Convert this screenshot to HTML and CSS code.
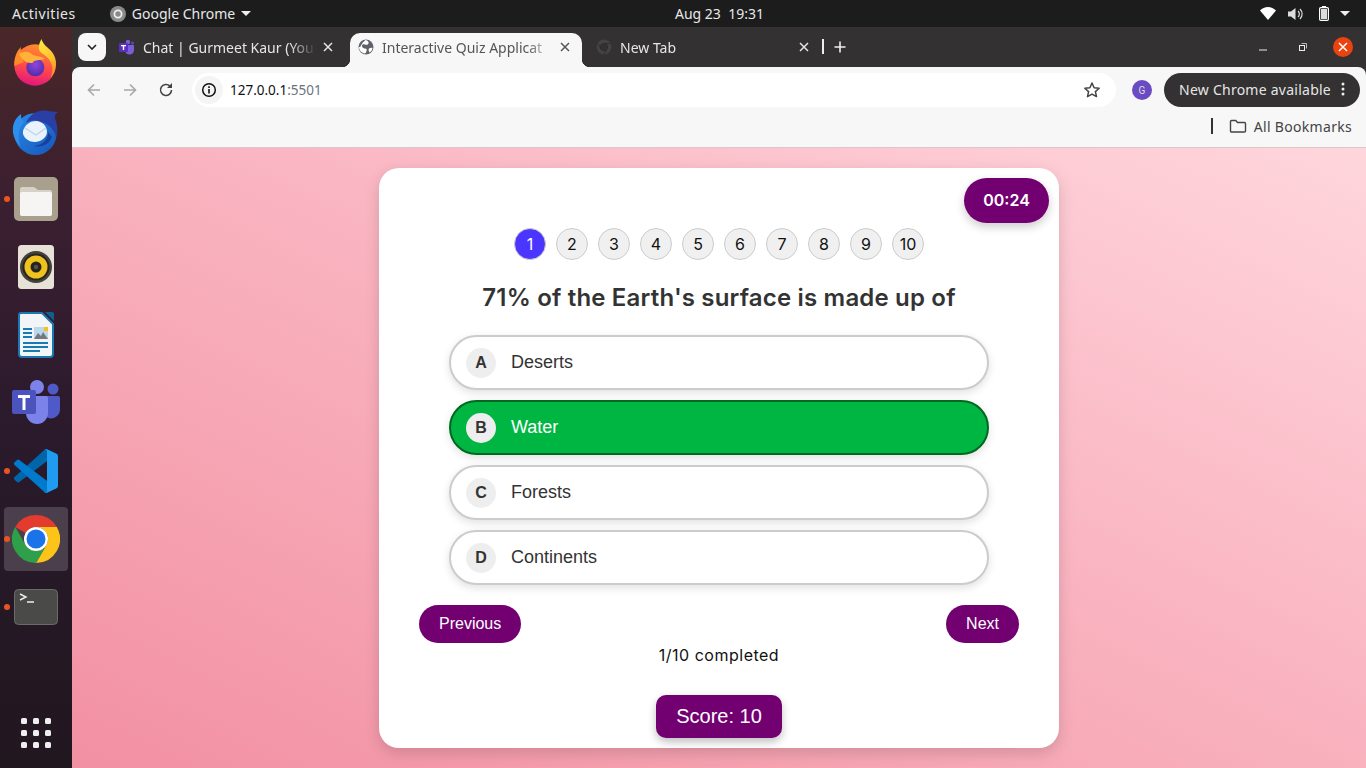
FILE: index.html
```html
<!DOCTYPE html>
<html lang="en">
<head>
  <meta charset="UTF-8" />
  <meta name="viewport" content="width=device-width, initial-scale=1.0"/>
  <title>Interactive Quiz Application</title>
  <link rel="stylesheet" href="styles.css">
</head>
<body>

  <header class="topbar">
    <div class="topbar-left">
      <span class="activities">Activities</span>
      <span class="app-menu">
        <svg class="app-menu-icon" viewBox="0 0 16 16"><circle cx="8" cy="8" r="8" fill="#8a8a8a"/><circle cx="8" cy="8" r="3.600" fill="none" stroke="#eee" stroke-width="1.800"/></svg>
        Google Chrome
        <i class="caret"></i>
      </span>
    </div>
    <div class="clock">Aug 23&nbsp;&nbsp;19:31</div>
    <div class="tray">
      <svg width="16" height="13" viewBox="0 0 16 13"><path d="M0 3.600C2 1.400 5 0 8 0s6 1.400 8 3.600L8 13z" fill="#fff"/></svg>
      <svg width="16" height="14" viewBox="0 0 16 14"><path d="M0 4.500h3L7.500 1v12L3 9.500H0z" fill="#ddd"/><path d="M10 4a4 4 0 0 1 0 6M12 2a7 7 0 0 1 0 10" fill="none" stroke="#ddd" stroke-width="1.200"/></svg>
      <svg class="tray-battery" width="10" height="15" viewBox="0 0 10 15"><rect x=".6" y="1.600" width="8.800" height="12.800" rx="1.200" fill="none" stroke="#fff" stroke-width="1.200"/><rect x="3" y="0" width="4" height="2" fill="#fff"/><rect x="2" y="3" width="6" height="10" fill="#ddd"/></svg>
      <i class="caret"></i>
    </div>
  </header>

  <div class="desktop">
    <aside class="dock">
      <div class="dock-item">
        <svg width="48" height="48" viewBox="0 0 48 48">
          <defs>
            <linearGradient id="ffBody" x1="0.6" y1="0" x2="0.4" y2="1"><stop offset="0" stop-color="#ff8f2a"/><stop offset=".55" stop-color="#ff4a4a"/><stop offset="1" stop-color="#e3157f"/></linearGradient>
            <linearGradient id="ffFlame" x1="0.3" y1="0" x2="0.7" y2="1"><stop offset="0" stop-color="#ffe83f"/><stop offset=".6" stop-color="#ffbd2e"/><stop offset="1" stop-color="#ff8a24"/></linearGradient>
            <radialGradient id="ffCore" cx=".5" cy=".35" r=".7"><stop offset="0" stop-color="#9146dc"/><stop offset="1" stop-color="#4a2aa6"/></radialGradient>
          </defs>
          <circle cx="23" cy="26" r="20.700" fill="url(#ffBody)"/>
          <path d="M9 8C4.500 12 2 19 2.300 27L12 23C9 18 8 14 9 8z" fill="#ff8a2a"/>
          <circle cx="23.300" cy="28.300" r="9" fill="url(#ffCore)"/>
          <path d="M29.500 0C31 6 36 8 40 13c3 4 4.300 8 4 13-.3 5-2 9-5.500 13 2.500-6 2.500-11 .5-15-2-5-6-8-9.500-10-3.500-3-3.500-8 0-14z" fill="url(#ffFlame)"/>
          <path d="M7 15c4-3 10-3 14 1 3 1 8 1 12 4-4 1-8 1-11 2-1 2-2 2-3 2-5 0-9-3-12-9z" fill="#ffb238"/>
        </svg>
      </div>
      <div class="dock-item">
        <svg width="48" height="48" viewBox="0 0 48 48">
          <defs>
            <linearGradient id="tbBody" x1="0" y1="0" x2="1" y2="1"><stop offset="0" stop-color="#2a8be8"/><stop offset="1" stop-color="#1555b8"/></linearGradient>
          </defs>
          <circle cx="23.500" cy="27" r="21" fill="url(#tbBody)"/>
          <path d="M9 7C2 12-.5 20 1.500 28c1 4 3 8 7 11C5 30 7 20 12 15 9.500 13 9 10 9 7z" fill="#2c8fee"/>
          <path d="M14 16C18 6 28 2 35 4l11 1c-3 2-4 4-3 7 3 6 3 14 1 18-2-8-8-14-18-16-6-1-9 0-12 2z" fill="#2a3fa6"/>
          <path d="M11 24c2-7 8-10 13-10 6 0 11 5 11 11 0 6-7 10-12 10-7 0-13-5-12-11z" fill="#eaf2fb"/>
          <path d="M13 21l11 7 10-7" fill="none" stroke="#bcd4ee" stroke-width="1.300"/>
          <path d="M36 25c1 7-5 13-14 14 8 2 15-2 18-9z" fill="#173f9e"/>
        </svg>
      </div>
      <div class="dock-item has-dot">
        <svg width="44" height="44" viewBox="0 0 44 44">
          <rect width="44" height="44" rx="5" fill="#a8a08c"/>
          <path d="M6 12a2 2 0 0 1 2-2h12l4 3h12a2 2 0 0 1 2 2v22a2 2 0 0 1-2 2H8a2 2 0 0 1-2-2z" fill="#d6d2c8"/>
          <path d="M6 17a2 2 0 0 1 2-2h28a2 2 0 0 1 2 2v20a2 2 0 0 1-2 2H8a2 2 0 0 1-2-2z" fill="#f6f5f3"/>
        </svg>
      </div>
      <div class="dock-item">
        <svg width="36" height="44" viewBox="0 0 36 44">
          <rect width="36" height="44" rx="3.500" fill="#e6e2d8"/>
          <circle cx="18" cy="22" r="16" fill="#45423e"/>
          <circle cx="18" cy="22" r="13.500" fill="#27251f"/>
          <circle cx="18" cy="22" r="11.500" fill="#efc21d"/>
          <circle cx="18" cy="22" r="5.500" fill="#26241f"/>
          <circle cx="18" cy="22" r="2.200" fill="#55524c"/>
        </svg>
      </div>
      <div class="dock-item">
        <svg width="36" height="46" viewBox="0 0 36 46">
          <path d="M3 1h21l11 11v30a3 3 0 0 1-3 3H4a3 3 0 0 1-3-3V3a2 2 0 0 1 2-2z" fill="#f2f5f8" stroke="#1b78b2" stroke-width="2"/>
          <path d="M27 0h7a2 2 0 0 1 2 2v7z" fill="#0f5f90"/>
          <path d="M5 17h9M5 21h9M5 25h9M5 31h25M5 35h25M5 39h17" stroke="#1a7ab5" stroke-width="2"/>
          <rect x="16" y="15" width="14" height="12" fill="#bcd8ea"/>
          <path d="M16 27l4-6 3 3 2-4 5 7z" fill="#77797c"/>
          <rect x="26" y="15" width="4" height="4" fill="#f2c21c"/>
        </svg>
      </div>
      <div class="dock-item">
        <svg width="48" height="48" viewBox="0 0 48 48">
          <circle cx="41" cy="10" r="5.500" fill="#5059c9"/>
          <path d="M33 17h13a2 2 0 0 1 2 2v11a9 9 0 0 1-15 7z" fill="#5059c9"/>
          <circle cx="25" cy="8" r="7" fill="#7b83eb"/>
          <path d="M14 17h20a2 2 0 0 1 2 2v15a11 11 0 0 1-22 0z" fill="#7b83eb"/>
          <rect y="11" width="24" height="24" rx="2" fill="#4b53bc"/>
          <path d="M6 16h12v3h-4.500v12h-3V19H6z" fill="#fff"/>
        </svg>
      </div>
      <div class="dock-item has-dot">
        <svg width="44" height="44" viewBox="0 0 100 100">
          <path d="M96.46 10.8 75.86.87a6.230 6.230 0 0 0-7.100 1.200L1.340 63.600a4.160 4.160 0 0 0 0 6.160l5.500 5a4.160 4.160 0 0 0 5.320.24L93.400 13.370c2.720-2.070 6.600-.13 6.600 3.280v-.24a6.250 6.250 0 0 0-3.540-5.600Z" fill="#0065a9"/>
          <path d="M96.46 89.200 75.860 99.130a6.230 6.230 0 0 1-7.100-1.200L1.340 36.400a4.160 4.160 0 0 1 0-6.160l5.500-5a4.160 4.160 0 0 1 5.320-.24L93.400 86.630c2.720 2.070 6.600.13 6.600-3.280v.24a6.250 6.250 0 0 1-3.540 5.600Z" fill="#007acc"/>
          <path d="M75.860 99.130a6.220 6.220 0 0 1-7.100-1.200c2.300 2.300 6.240.67 6.240-2.580V4.650c0-3.250-3.940-4.880-6.240-2.580a6.220 6.220 0 0 1 7.100-1.200l20.600 9.900A6.250 6.250 0 0 1 100 16.400v67.200a6.250 6.250 0 0 1-3.540 5.630Z" fill="#1f9cf0"/>
        </svg>
      </div>
      <div class="dock-item has-dot is-current">
        <svg width="48" height="48" viewBox="0 0 48 48">
          <path d="M24 0A24 24 0 0 1 44.800 12H24a12 12 0 0 0-10.400 6L3.200 12A24 24 0 0 1 24 0z" fill="#e33b2e"/>
          <path d="M44.800 12A24 24 0 0 1 24 48L34.400 30A12 12 0 0 0 24 12z" fill="#fcc419"/>
          <path d="M3.200 12A24 24 0 0 0 24 48L34.400 30a12 12 0 0 1-20.800 0z" fill="#2fa04a"/>
          <circle cx="24" cy="24" r="12" fill="#fff"/>
          <circle cx="24" cy="24" r="9.500" fill="#1a73e8"/>
        </svg>
      </div>
      <div class="dock-item has-dot">
        <svg width="44" height="36" viewBox="0 0 44 36">
          <rect x=".5" y=".5" width="43" height="35" rx="4" fill="#4a4a48" stroke="#6b6b68"/>
          <path d="M6 5l6 3-6 3M13 13h7" fill="none" stroke="#eee" stroke-width="1.400"/>
        </svg>
      </div>
      <div class="dock-item dock-apps">
        <div class="apps-grid">
          <i></i><i></i><i></i><i></i><i></i><i></i><i></i><i></i><i></i>
        </div>
      </div>
    </aside>

    <div class="browser">
      <div class="tabstrip">
        <button class="tab-search">
          <svg width="10" height="6" viewBox="0 0 10 6"><path d="M1 1l4 4 4-4" fill="none" stroke="#222" stroke-width="1.600"/></svg>
        </button>
        <div class="tab">
          <svg class="favicon" width="16" height="16" viewBox="0 0 16 16"><circle cx="9" cy="3" r="2.200" fill="#7b5fd8"/><circle cx="13.500" cy="4" r="1.600" fill="#5b45b5"/><path d="M6 6h9v5a4.500 4.500 0 0 1-9 0z" fill="#7b5fd8"/><rect y="4" width="9" height="9" rx="1" fill="#5a2fc0"/><path d="M2 6h5v1.200H5.200V11H3.800V7.200H2z" fill="#fff"/></svg>
          <span class="tab-title">Chat | Gurmeet Kaur (You</span>
          <svg class="tab-close" width="16" height="10" viewBox="0 0 16 10"><path d="M4 1l8 8M12 1l-8 8" stroke="currentColor" stroke-width="1.500"/></svg>
        </div>
        <div class="tab tab-active">
          <svg class="favicon" width="16" height="16" viewBox="0 0 16 16"><circle cx="8" cy="8" r="7.500" fill="#5f6368"/><path d="M8 1c2 1 3 2 2.500 3.500S8 6 7 5.500 4.500 5 4 6.500s1.500 3 3 3 2 1 1.500 2.500-1 2-1.500 2.500C4 14 1 11.500 1 8c1 0 1.500-.5 2-1.500S6 1.500 8 1zM11 9.500c1-.5 2.500-1 3.500-.5-.3 2-1.500 3.500-3 4.500-.5-1-1.500-3-.5-4z" fill="#fff"/></svg>
          <span class="tab-title">Interactive Quiz Applicat</span>
          <svg class="tab-close" width="16" height="10" viewBox="0 0 16 10"><path d="M4 1l8 8M12 1l-8 8" stroke="currentColor" stroke-width="1.500"/></svg>
        </div>
        <div class="tab tab-last">
          <svg class="favicon" width="16" height="16" viewBox="0 0 16 16"><circle cx="8" cy="8" r="7.500" fill="#434345"/><circle cx="8" cy="8" r="3.500" fill="#333132" stroke="#2c2c2e"/><path d="M8 4.500h6.500M5 10L1.800 4.500M11 10l-3.200 5.300" stroke="#2f2f31"/></svg>
          <span class="tab-title tab-title-plain">New Tab</span>
          <svg class="tab-close" width="16" height="10" viewBox="0 0 16 10"><path d="M4 1l8 8M12 1l-8 8" stroke="currentColor" stroke-width="1.500"/></svg>
        </div>
        <span class="tab-sep"></span>
        <svg class="tab-new" width="12" height="12" viewBox="0 0 12 12"><path d="M6 .5v11M.5 6h11" stroke="#eee" stroke-width="1.600"/></svg>
        <div class="win-controls">
          <svg width="10" height="10" viewBox="0 0 10 10"><path d="M1 8h8" stroke="#eee" stroke-width="1"/></svg>
          <svg width="10" height="10" viewBox="0 0 10 10"><rect x="1.500" y="3.500" width="5" height="5" fill="none" stroke="#eee"/><path d="M3.500 1.500h5v5" fill="none" stroke="#bbb"/></svg>
          <span class="win-close">
            <svg width="10" height="10" viewBox="0 0 10 10"><path d="M1 1l8 8M9 1l-8 8" stroke="#fff" stroke-width="1.500"/></svg>
          </span>
        </div>
      </div>

      <div class="toolbar">
        <svg class="tool" width="16" height="16" viewBox="0 0 16 16"><path d="M14 8H2.500M8 2.500L2.500 8 8 13.500" fill="none" stroke="#a8a8a8" stroke-width="1.600"/></svg>
        <svg class="tool" width="16" height="16" viewBox="0 0 16 16"><path d="M2 8h11.500M8 2.500L13.500 8 8 13.500" fill="none" stroke="#a8a8a8" stroke-width="1.600"/></svg>
        <svg class="tool" width="16" height="16" viewBox="0 0 16 16"><path d="M13.500 8a5.500 5.500 0 1 1-1.600-3.900" fill="none" stroke="#444" stroke-width="1.600"/><path d="M14 1v5H9z" fill="#444"/></svg>
        <div class="omnibox">
          <span class="site-info">
            <svg width="16" height="16" viewBox="0 0 16 16"><circle cx="8" cy="8" r="6.300" fill="none" stroke="#111" stroke-width="1.500"/><path d="M8 7v4.500M8 4.300v1.600" stroke="#111" stroke-width="1.600"/></svg>
          </span>
          <span class="url">127.0.0.1<span class="url-port">:5501</span></span>
          <svg class="star" width="18" height="18" viewBox="0 0 18 18"><path d="M9 2l2.100 4.700 5.100.5-3.800 3.400 1.100 5L9 13.100l-4.500 2.500 1.100-5-3.800-3.400 5.100-.5z" fill="none" stroke="#444" stroke-width="1.500" stroke-linejoin="round"/></svg>
        </div>
        <span class="avatar">G</span>
        <div class="update-pill">
          <span>New Chrome available</span>
          <svg width="4" height="14" viewBox="0 0 4 14"><circle cx="2" cy="2" r="1.500" fill="#eee"/><circle cx="2" cy="7" r="1.500" fill="#eee"/><circle cx="2" cy="12" r="1.500" fill="#eee"/></svg>
        </div>
      </div>

      <div class="bookmarks">
        <span class="bookmarks-sep"></span>
        <svg width="18" height="14" viewBox="0 0 18 14"><path d="M1.500 2.500a1 1 0 0 1 1-1h4.300l1.700 2h7a1 1 0 0 1 1 1v7.500a1 1 0 0 1-1 1h-13a1 1 0 0 1-1-1z" fill="none" stroke="#444" stroke-width="1.400"/></svg>
        <span class="bookmarks-label">All Bookmarks</span>
      </div>

      <main class="page">
        <section class="quiz-card">
          <div class="timer">00:24</div>

          <div class="question-nav">
            <span class="num num-active">1</span>
            <span class="num">2</span>
            <span class="num">3</span>
            <span class="num">4</span>
            <span class="num">5</span>
            <span class="num">6</span>
            <span class="num">7</span>
            <span class="num">8</span>
            <span class="num">9</span>
            <span class="num">10</span>
          </div>

          <h2 class="question">71% of the Earth's surface is made up of</h2>

          <div class="options">
            <div class="option"><span class="letter">A</span>Deserts</div>
            <div class="option option-correct"><span class="letter">B</span>Water</div>
            <div class="option"><span class="letter">C</span>Forests</div>
            <div class="option"><span class="letter">D</span>Continents</div>
          </div>

          <div class="quiz-buttons">
            <button class="quiz-btn">Previous</button>
            <button class="quiz-btn">Next</button>
          </div>

          <p class="progress">1/10 completed</p>

          <div class="score">Score: 10</div>
        </section>
      </main>
    </div>
  </div>

</body>
</html>
```

FILE: styles.css
```css
* {
  box-sizing: border-box;
}
html, body {
  margin: 0;
  height: 100%;
  overflow: hidden;
}
body {
  display: flex;
  flex-direction: column;
  font-family: "Noto Sans", sans-serif;
  background: #1d1d1d;
}

/* ubuntu top bar */
.topbar {
  height: 27px;
  flex: none;
  display: grid;
  grid-template-columns: 663px auto 1fr;
  align-items: center;
  background: #1c1c1c;
  color: #e8e8e8;
  font-size: 14px;
  padding: 0 16px 0 12px;
}
.topbar-left {
  display: flex;
  align-items: center;
  gap: 34px;
}
.activities {
  letter-spacing: 0.55px;
}
.app-menu {
  display: flex;
  align-items: center;
  gap: 6px;
}
.app-menu-icon {
  width: 16px;
  height: 16px;
}
.caret {
  display: inline-block;
  width: 0;
  height: 0;
  border-left: 5px solid transparent;
  border-right: 5px solid transparent;
  border-top: 5px solid #eee;
}
.clock {
  text-align: center;
  font-size: 14px;
}
.tray {
  display: flex;
  justify-content: flex-end;
  align-items: center;
  gap: 12px;
}
.tray-battery {
  margin: 0 -1px 0 3px;
}

.desktop {
  flex: 1;
  display: flex;
  min-height: 0;
}

/* dock */
.dock {
  width: 72px;
  flex: none;
  display: flex;
  flex-direction: column;
  align-items: center;
  gap: 4px;
  padding: 4px 0 3px;
  background: linear-gradient(to bottom, #4a2728 0%, #3a1f30 25%, #2a1a2c 55%, #21171f 100%);
}
.dock-item {
  position: relative;
  width: 64px;
  height: 64px;
  flex: none;
  display: flex;
  align-items: center;
  justify-content: center;
  border-radius: 4px;
}
.is-current {
  background: rgba(255,255,255,0.17);
}
.has-dot::before {
  content: "";
  position: absolute;
  left: 0;
  top: 29px;
  width: 6px;
  height: 6px;
  border-radius: 50%;
  background: #e95420;
}
.dock-apps {
  margin-top: auto;
}
.apps-grid {
  display: grid;
  grid-template-columns: repeat(3, 6px);
  gap: 6px;
}
.apps-grid i {
  width: 6px;
  height: 6px;
  border-radius: 1.5px;
  background: #eee;
}

/* chrome */
.browser {
  flex: 1;
  display: flex;
  flex-direction: column;
  min-width: 0;
  background: #333132;
}
.tabstrip {
  height: 40px;
  flex: none;
  display: flex;
  align-items: flex-end;
  padding-left: 6px;
  color: #e6e6e6;
  font-size: 14px;
}
.tab-search {
  width: 28px;
  height: 28px;
  align-self: flex-start;
  margin-top: 6px;
  margin-right: 2px;
  padding: 0;
  display: flex;
  align-items: center;
  justify-content: center;
  border: 0;
  border-radius: 8px;
  background: #f7f7f7;
}
.tab {
  position: relative;
  width: 234px;
  height: 34px;
  flex: none;
  display: flex;
  align-items: center;
  padding: 0 6px 6px 11px;
}
.tab-active {
  width: 232px;
  margin: 0 8px;
  padding: 0 9px 6px 8px;
  background: #f7f7f7;
  color: #555;
  border-radius: 10px 10px 0 0;
}
.tab-last {
  width: 231px;
  padding: 0 9px 6px 6px;
}
.tab-active::before,
.tab-active::after {
  content: "";
  position: absolute;
  bottom: 0;
  width: 8px;
  height: 8px;
  background: radial-gradient(circle at 0 0, transparent 8px, #f7f7f7 8.5px);
}
.tab-active::before {
  left: -8px;
}
.tab-active::after {
  right: -8px;
  transform: scaleX(-1);
}
.favicon {
  flex: none;
  margin-right: 8px;
}
.tab-title {
  flex: 1;
  white-space: nowrap;
  overflow: hidden;
  -webkit-mask-image: linear-gradient(to right, #000 85%, transparent 100%);
  mask-image: linear-gradient(to right, #000 85%, transparent 100%);
}
.tab-close {
  flex: none;
  margin-left: 4px;
}
.tab-sep {
  width: 2px;
  height: 15px;
  background: #eee;
  margin: 0 0 13px 1px;
}
.tab-new {
  margin: 0 0 14px 10px;
}
.win-controls {
  margin-left: auto;
  align-self: stretch;
  display: flex;
  align-items: center;
  gap: 30px;
  padding-right: 13px;
}
.win-close {
  width: 20px;
  height: 20px;
  margin-left: -5px;
  display: flex;
  align-items: center;
  justify-content: center;
  border-radius: 50%;
  background: #e9430f;
}

.toolbar {
  height: 40px;
  flex: none;
  display: flex;
  align-items: flex-start;
  padding: 6px 6px 0 14px;
  background: #f7f7f7;
  border-radius: 8px 8px 0 0;
}
.tool {
  margin: 9px 20px 0 0;
  flex: none;
}
.tool:nth-child(3) {
  margin-right: 18px;
}
.omnibox {
  flex: 1;
  height: 34px;
  display: flex;
  align-items: center;
  background: #fff;
  border-radius: 17px;
  padding: 0 15px 0 3px;
}
.site-info {
  width: 28px;
  height: 28px;
  display: flex;
  align-items: center;
  justify-content: center;
  border-radius: 50%;
  background: #f4f4f4;
}
.url {
  flex: 1;
  margin-left: 7px;
  font-size: 13.5px;
  color: #111;
}
.url-port {
  color: #6a7480;
}
.avatar {
  width: 20px;
  height: 20px;
  margin: 7px 12px 0 16px;
  flex: none;
  display: flex;
  align-items: center;
  justify-content: center;
  border-radius: 50%;
  background: #6a4bc4;
  color: #ddd;
  font-family: "Roboto", sans-serif;
  font-size: 10px;
}
.update-pill {
  width: 196px;
  height: 34px;
  flex: none;
  display: flex;
  align-items: center;
  justify-content: space-between;
  padding: 0 15px 2px;
  border-radius: 17px;
  background: #333132;
  color: #e6e6e6;
  font-size: 14px;
  letter-spacing: 0.25px;
}

.bookmarks {
  height: 41px;
  flex: none;
  display: flex;
  align-items: center;
  justify-content: flex-end;
  padding: 0 14px 2px 0;
  background: #f7f7f7;
  border-bottom: 1px solid #d9c8cc;
  color: #444;
  font-size: 14px;
}
.bookmarks-sep {
  width: 2px;
  height: 16px;
  background: #333;
  margin-right: 16px;
}
.bookmarks-label {
  margin-left: 7px;
  letter-spacing: 0.3px;
}

/* quiz page */
.page {
  flex: 1;
  min-height: 0;
  display: flex;
  justify-content: center;
  padding-top: 20px;
  background: linear-gradient(to top right, #f290a2 0%, #f9b1be 50%, #ffd6dd 100%);
}
.quiz-card {
  position: relative;
  width: 680px;
  height: 580px;
  padding: 60px 40px 10px;
  background: #fff;
  border-radius: 20px;
  box-shadow: 0 5px 15px rgba(0,0,0,0.15);
  text-align: center;
}
.timer {
  position: absolute;
  top: 10px;
  right: 10px;
  width: 85px;
  height: 45px;
  line-height: 45px;
  border-radius: 23px;
  background: #720071;
  color: #fff;
  font-family: "Inter", sans-serif;
  font-size: 16px;
  font-weight: 600;
  box-shadow: 0 4px 10px rgba(0,0,0,0.2);
}
.question-nav {
  display: flex;
  justify-content: center;
  gap: 10px;
}
.num {
  width: 32px;
  height: 32px;
  display: flex;
  align-items: center;
  justify-content: center;
  border: 1px solid #ccc;
  border-radius: 50%;
  background: #f0f0f0;
  color: #111;
  font-family: "Inter", sans-serif;
  font-size: 16px;
}
.num-active {
  background: #4b36ff;
  color: #fff;
}
.question {
  margin: 20px 0 19px;
  font-family: "Inter", sans-serif;
  font-size: 24px;
  line-height: 36px;
  font-weight: 600;
  letter-spacing: 0.18px;
  color: #333;
}
.options {
  width: 540px;
  margin: 0 auto;
  display: flex;
  flex-direction: column;
  gap: 10px;
}
.option {
  height: 55px;
  display: flex;
  align-items: center;
  padding: 0 15px;
  border: 2px solid #ccc;
  border-radius: 30px;
  background: #fff;
  box-shadow: 0 3px 8px rgba(0,0,0,0.12);
  color: #333;
  font-family: "Liberation Sans", Arial, sans-serif;
  font-size: 18px;
}
.option-correct {
  background: #00b642;
  border-color: #00691f;
  color: #fff;
}
.letter {
  width: 30px;
  height: 30px;
  margin-right: 15px;
  display: flex;
  align-items: center;
  justify-content: center;
  border-radius: 50%;
  background: #eee;
  color: #333;
  font-size: 16px;
  font-weight: 700;
}
.quiz-buttons {
  display: flex;
  justify-content: space-between;
  margin-top: 20px;
}
.quiz-btn {
  height: 38px;
  padding: 0 20px;
  border: 0;
  border-radius: 20px;
  background: #720071;
  color: #fff;
  font-family: "Liberation Sans", Arial, sans-serif;
  font-size: 16px;
}
.progress {
  margin: 0;
  font-family: "Inter", sans-serif;
  font-size: 16px;
  line-height: 24px;
  letter-spacing: 0.5px;
  color: #111;
}
.score {
  display: inline-block;
  margin-top: 28px;
  width: 126px;
  height: 43px;
  line-height: 43px;
  border-radius: 10px;
  background: #720071;
  color: #fff;
  font-family: "Liberation Sans", Arial, sans-serif;
  font-size: 20px;
  box-shadow: 0 4px 8px rgba(0,0,0,0.25);
}
```
